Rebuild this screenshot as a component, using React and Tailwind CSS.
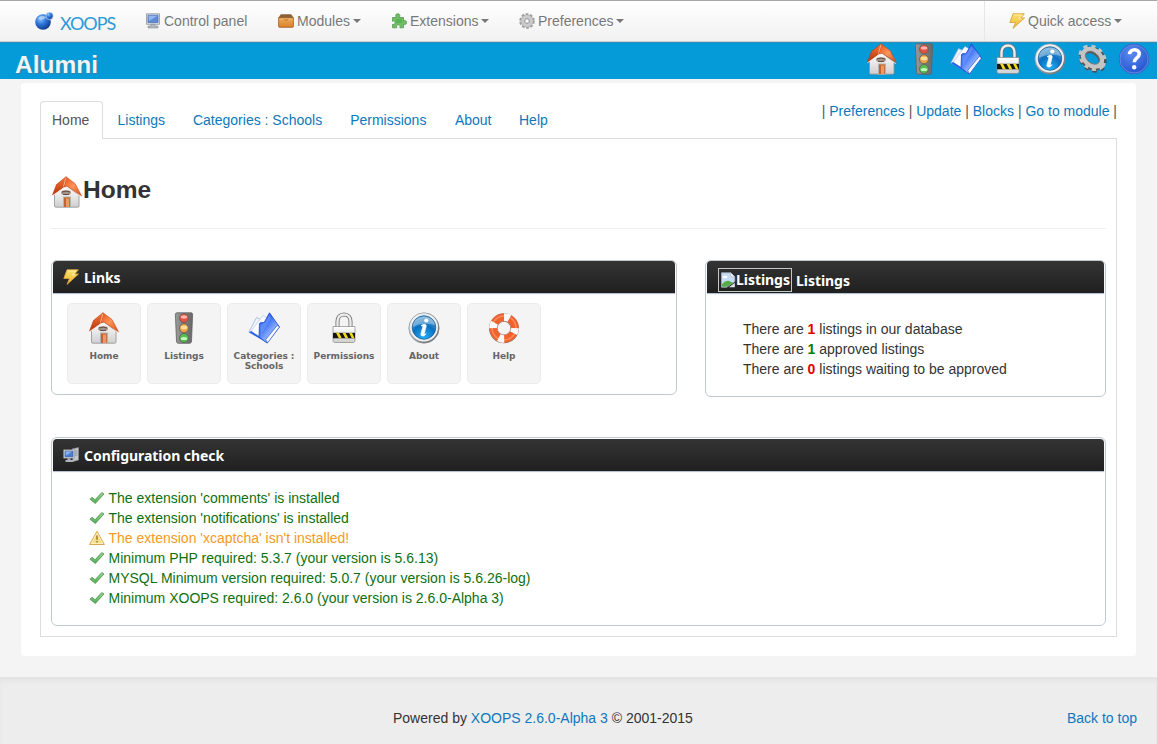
import React from 'react';

function Defs() {
  return (
    <svg className="absolute h-0 w-0" aria-hidden="true">
      <defs>
        <linearGradient id="roofLeft" x1="0" y1="0" x2="0" y2="1">
          <stop offset="0" stopColor="#f7793c" />
          <stop offset="1" stopColor="#b93208" />
        </linearGradient>
        <linearGradient id="roofRight" x1="0" y1="0" x2="1" y2="1">
          <stop offset="0" stopColor="#e84e14" />
          <stop offset=".5" stopColor="#ff9457" />
          <stop offset="1" stopColor="#e04a14" />
        </linearGradient>
        <linearGradient id="wall" x1="0" y1="0" x2="0" y2="1">
          <stop offset="0" stopColor="#ffffff" />
          <stop offset="1" stopColor="#cfcfcf" />
        </linearGradient>
        <linearGradient id="book" x1="0" y1="0" x2=".8" y2="1">
          <stop offset="0" stopColor="#2a5be8" />
          <stop offset=".4" stopColor="#3f74f4" />
          <stop offset=".75" stopColor="#9dbcff" />
          <stop offset="1" stopColor="#3a6cf2" />
        </linearGradient>
        <linearGradient id="steel" x1="0" y1="0" x2="1" y2="1">
          <stop offset="0" stopColor="#f2f2f2" />
          <stop offset=".5" stopColor="#a9a9a9" />
          <stop offset="1" stopColor="#5a5a5a" />
        </linearGradient>
        <linearGradient id="casing" x1="0" y1="0" x2="1" y2="0">
          <stop offset="0" stopColor="#9a9a9a" />
          <stop offset=".5" stopColor="#808080" />
          <stop offset="1" stopColor="#686868" />
        </linearGradient>
        <radialGradient id="info" cx=".5" cy=".9" r=".9">
          <stop offset="0" stopColor="#22b0f8" />
          <stop offset=".55" stopColor="#0c70c0" />
          <stop offset="1" stopColor="#6fa9d4" />
        </radialGradient>
        <radialGradient id="question" cx=".4" cy=".3" r=".8">
          <stop offset="0" stopColor="#5b8bf0" />
          <stop offset="1" stopColor="#2050cc" />
        </radialGradient>
        <radialGradient id="ball" cx=".35" cy=".3" r=".8">
          <stop offset="0" stopColor="#8fc4fb" />
          <stop offset=".45" stopColor="#2b74d8" />
          <stop offset="1" stopColor="#0b2f7c" />
        </radialGradient>
        <linearGradient id="boltFill" x1="0" y1="0" x2="0" y2="1">
          <stop offset="0" stopColor="#fbe070" />
          <stop offset="1" stopColor="#f0b630" />
        </linearGradient>
        <linearGradient id="box" x1="0" y1="0" x2="0" y2="1">
          <stop offset="0" stopColor="#f0ac58" />
          <stop offset="1" stopColor="#dc8028" />
        </linearGradient>
        <linearGradient id="tick" x1="0" y1="0" x2="0" y2="1">
          <stop offset="0" stopColor="#9ad494" />
          <stop offset="1" stopColor="#55aa55" />
        </linearGradient>
      </defs>
    </svg>
  );
}

const Svg = ({ size = 32, children }) => (
  <svg width={size} height={size} viewBox={size > 20 ? '0 0 32 32' : '0 0 16 16'} className="block shrink-0">
    {children}
  </svg>
);

const House = () => (
  <Svg>
    <path d="M3.500 18 13 10h3l12 9v11c0 .8-.5 1.200-1.300 1.200H4.800c-.8 0-1.300-.4-1.300-1.200z" fill="url(#wall)" stroke="#909090" strokeWidth=".8" />
    <path d="M12 20.500h8v11h-8z" fill="#b4b4b4" />
    <path d="M13 21.500h5.800v9.500H13z" fill="#c4642c" />
    <path d="M15 22.500h3V31h-3z" fill="#e89a68" />
    <ellipse cx="15" cy="16.700" rx="5" ry="2.400" fill="#a3958c" />
    <path d="M11 16q4-2 8 0M12 18.200q3 1 6 0" stroke="#5d3e34" strokeWidth=".9" fill="none" />
    <path d="M15 .8 24 7.500 30.500 19.800 16 10 13 11z" fill="url(#roofRight)" stroke="#c8481a" strokeWidth=".6" strokeLinejoin="round" />
    <path d="M15 .8 5.500 8.500 1.500 19 13 10.800z" fill="url(#roofLeft)" stroke="#b5380f" strokeWidth=".6" strokeLinejoin="round" />
    <path d="M15 1.500 12.500 10.500" stroke="#ffc09a" strokeWidth=".9" />
    <path d="M1.500 19.800 14 11.200 30 20.600" fill="none" stroke="#f7e3da" strokeWidth=".9" />
  </Svg>
);

const Light = () => (
  <Svg>
    <path d="M9 .8h14c1.200 0 1.600.7 1.600 1.800L23.500 29c0 1.500-.8 2.300-2.200 2.300H10.700c-1.400 0-2.200-.8-2.200-2.300L7.400 2.600C7.400 1.500 7.800.8 9 .8z" fill="url(#casing)" stroke="#606060" strokeWidth=".8" />
    <g stroke="#5e5e5e" strokeWidth=".8">
      <circle cx="16" cy="6.200" r="4.500" fill="#e4503e" />
      <circle cx="16" cy="16.200" r="4.500" fill="#eda440" />
      <circle cx="16" cy="26" r="4.500" fill="#55c04e" />
    </g>
    <ellipse cx="16" cy="5" rx="3.300" ry="1.700" fill="#ffc5bc" opacity=".85" />
    <ellipse cx="16" cy="15.500" rx="3.300" ry="1.900" fill="#ffe2a8" opacity=".9" />
    <ellipse cx="16" cy="26.500" rx="3.300" ry="1.600" fill="#d3ffcb" opacity=".9" />
  </Svg>
);

const Book = () => (
  <Svg>
    <path d="M.8 20 8.500 5.500 17 9.500 14 27z" fill="#eef2fc" stroke="#9aabd6" strokeWidth=".7" />
    <path d="M4 18 15 3.500l5 3L14 26 4 20z" fill="#fdfdff" stroke="#b3c0e4" strokeWidth=".6" />
    <path d="M1 20.300 3 19l16.500 10.500.5 2z" fill="#2b62ea" />
    <path d="M11.500 11.500c2-2.500 4 .5 5.500-2.500L21.500.8 31.500 15 19 31l-8-6z" fill="url(#book)" stroke="#1e46cc" strokeWidth=".8" strokeLinejoin="round" />
    <path d="M31.300 15.200 19.500 31l-1.800-3.500L29.500 13z" fill="#f5f8ff" stroke="#2c57d8" strokeWidth=".7" />
    <path d="m12 13 5-2.500 4-7 2 3L13 22z" fill="#8fb0ff" opacity=".4" />
  </Svg>
);

const Padlock = () => (
  <Svg>
    <path d="M9.500 16V9.500C9.500 5.300 12 2.500 16 2.500s6.500 2.800 6.500 7V16" fill="none" stroke="#6e6e6e" strokeWidth="4" />
    <path d="M9.500 16V9.500C9.500 5.300 12 2.500 16 2.500s6.500 2.800 6.500 7V16" fill="none" stroke="#ececec" strokeWidth="2.400" />
    <path d="M5 14.500h22v14c0 1.300-.8 2-2 2H7c-1.200 0-2-.7-2-2z" fill="url(#wall)" stroke="#8a8a8a" strokeWidth=".7" />
    <path d="M5 20.800h22v5.500H5z" fill="#161616" />
    <path d="m8 20.800 2.800 5.500h3L11 20.800zM14.500 20.800l2.800 5.500h3l-2.800-5.500zM21 20.800l2.800 5.500h2.700L24 20.800z" fill="#f2dc18" />
  </Svg>
);

const Info = () => (
  <Svg>
    <circle cx="16" cy="16" r="15.200" fill="url(#steel)" stroke="#7d868e" strokeWidth=".6" />
    <circle cx="16" cy="15.500" r="14" fill="#edf1f3" />
    <circle cx="16" cy="15.500" r="11.800" fill="url(#info)" stroke="#175487" strokeWidth=".7" />
    <path d="M5 13C7 2 25 2 27 13c-7-2-15-2-22 2z" fill="#d8eaf5" opacity=".4" />
    <circle cx="18.300" cy="8.500" r="2.100" fill="#fff" />
    <path d="M13 13.800c2-1.700 5.500-2.300 5.200.4l-1.900 7c-.3 1.300.4 1.400 1.800.5-1.300 2.600-5.500 3.300-5.200.4l1.900-7c.2-1.300-.6-1.500-1.800-1.300z" fill="#fff" stroke="#fff" strokeWidth=".7" />
  </Svg>
);

function BigGear() {
  return (
    <Svg>
      <g transform="translate(-.5 -.5) rotate(38 16 16)">
        <ellipse cx="17.500" cy="16" rx="12" ry="9" fill="none" stroke="#4e4e4e" strokeWidth="6" strokeDasharray="3.800 3.600" strokeDashoffset="1" />
        <ellipse cx="17" cy="16.500" rx="10.200" ry="7.600" fill="none" stroke="#5a5a5a" strokeWidth="5" />
        <ellipse cx="16.300" cy="14.800" rx="12.400" ry="9.600" fill="none" stroke="#c4c4c4" strokeWidth="5" strokeDasharray="3.800 3.530" />
        <ellipse cx="16.300" cy="14.800" rx="10.200" ry="7.600" fill="none" stroke="#c4c4c4" strokeWidth="4.600" />
        <ellipse cx="16.300" cy="14.800" rx="8" ry="5.400" fill="none" stroke="#6f7478" strokeWidth=".9" />
      </g>
    </Svg>
  );
}

const Question = () => (
  <Svg>
    <circle cx="16" cy="16" r="15.200" fill="#3862c8" />
    <circle cx="16" cy="16" r="14" fill="url(#question)" stroke="#6f91e8" strokeWidth=".8" />
    <path d="M11.500 11.200c.5-6 10-6 9.700-.1-.2 4-5 3.700-4.900 8.200" fill="none" stroke="#fff" strokeWidth="3.600" />
    <circle cx="16.200" cy="24.300" r="2.200" fill="#fff" />
  </Svg>
);

const Buoy = () => (
  <Svg>
    <circle cx="16" cy="16.300" r="10.800" fill="none" stroke="#9a7a6e" strokeWidth="8.400" />
    <circle cx="16" cy="16" r="10.800" fill="none" stroke="#f2622e" strokeWidth="7.600" />
    <circle cx="16" cy="16" r="12" fill="none" stroke="#ff8a5a" strokeWidth="1.500" />
    <g transform="rotate(13 16 16)">
      <circle cx="16" cy="16" r="10.800" fill="none" stroke="#fafafa" strokeWidth="8" strokeDasharray="5.600 11.365" strokeDashoffset="2.800" />
    </g>
    <circle cx="16" cy="16" r="6.800" fill="none" stroke="#b98a78" strokeWidth=".7" />
  </Svg>
);

const Bolt = () => (
  <Svg size={16}>
    <path d="M4 .8h11.300L11.800 5H15.500L4 15.400 6.500 9.500H.8z" fill="url(#boltFill)" stroke="#d6a63c" strokeWidth=".9" strokeLinejoin="round" />
    <path d="M5 2h8L9.500 6h3" fill="none" stroke="#fff3b4" strokeWidth=".8" />
  </Svg>
);

const Monitor = () => (
  <Svg size={16}>
    <path d="M1.500.8h13v10.500h-13z" fill="#d8dce2" stroke="#8d949e" strokeWidth=".8" />
    <path d="M3 2.300h10v7.200H3z" fill="#5d8bd6" stroke="#4a6fb0" strokeWidth=".7" />
    <path d="M3.500 2.800h9L4 8z" fill="#94b6ee" />
    <path d="M6 11.300h4V13h3v2H3v-2h3z" fill="#b4b8be" stroke="#888e96" strokeWidth=".6" />
  </Svg>
);

const Computer = () => (
  <Svg size={16}>
    <path d="M9 2 15.500.6V13L10 14.500z" fill="#c4c7cb" stroke="#8c9096" strokeWidth=".6" />
    <path d="M12 4h2.500M12 6h2.500M12 8h2.500" stroke="#7a7f86" strokeWidth=".7" />
    <path d="M.6 2.800h10.800v8.400H.6z" fill="#d4d8de" stroke="#868c94" strokeWidth=".6" />
    <path d="M2 4.200h8v5.600H2z" fill="#4b7fd4" stroke="#34589a" strokeWidth=".6" />
    <path d="M2.500 4.600h6.500L3 8.500z" fill="#8fb4f0" />
    <path d="M4.500 11.300h3V13h2.500v2H2.500v-2h2z" fill="#b0b4ba" />
  </Svg>
);

const Drawer = () => (
  <Svg size={16}>
    <path d="M2.800 1.700h10.400L15.200 5H.8z" fill="#8e6238" stroke="#7c4e28" strokeWidth=".7" strokeLinejoin="round" />
    <path d="M.6 4.800h14.800v8.700c0 .5-.3.800-.8.800H1.400c-.5 0-.8-.3-.8-.8z" fill="url(#box)" stroke="#9a5a20" strokeWidth=".8" />
    <path d="M1.400 5.900h13.200" stroke="#f9cd93" strokeWidth=".6" />
    <path d="M5.800 6.300q2.200 2 4.400 0" fill="none" stroke="#b86a24" strokeWidth=".8" />
  </Svg>
);

const Puzzle = () => (
  <Svg size={16}>
    <path d="M1.500 4.500h3.800C4 1.800 5 .8 6.800.8S9.500 2 8.500 4.500h4V8c2-1 3 0 3 1.500s-1 2.500-3 1.700v3.600H8.800c.7-2-.1-3-1.500-3s-2.200 1-1.500 3H1.500v-3.500C3.500 12 4 11 4 9.600S3 7.500 1.500 8.300z" fill="#74bd68" stroke="#549a50" strokeWidth=".8" />
    <path d="M5 6h6v4H5z" fill="#47ad47" opacity=".6" />
  </Svg>
);

const Cog = () => (
  <Svg size={16}>
    <circle cx="8" cy="8" r="6.200" fill="none" stroke="#a0a0a0" strokeWidth="3.200" strokeDasharray="2.500 1.396" />
    <circle cx="8" cy="8" r="4.300" fill="none" stroke="#a2a2a2" strokeWidth="4.400" />
    <circle cx="8" cy="8" r="4.300" fill="none" stroke="#cbcbcb" strokeWidth="3.200" />
    <circle cx="8" cy="8" r="2.100" fill="#fafafa" stroke="#999" strokeWidth=".7" />
  </Svg>
);

const Tick = () => (
  <Svg size={16}>
    <path d="M1 9.200 3 7.200l3 2.600L12.800 2.500l2.200 1.500L6.300 13.500z" fill="url(#tick)" stroke="#4a964c" strokeWidth=".8" strokeLinejoin="round" />
  </Svg>
);

const Warning = () => (
  <Svg size={16}>
    <path d="M8 1.300 15.400 14.500H.6z" fill="#f9dc84" stroke="#dba654" strokeWidth="1" strokeLinejoin="round" />
    <path d="M8 3.300 13.700 13.500H2.300z" fill="none" stroke="#fff4cf" strokeWidth=".8" />
    <path d="M8 5.500v4.300M8 11v1.500" stroke="#9a7426" strokeWidth="1.400" />
  </Svg>
);

const LogoMark = () => (
  <svg width="20" height="18" viewBox="0 0 20 18" className="block shrink-0">
    <circle cx="8" cy="10" r="7.800" fill="url(#ball)" />
    <circle cx="14.500" cy="3.900" r="3.700" fill="url(#ball)" stroke="#dcecff" strokeWidth=".7" />
    <path d="M3 7C5 3 9 3 11 5.500 9 7.500 6 8.500 3 7z" fill="#d4e8ff" opacity=".55" />
  </svg>
);

const Broken = () => (
  <Svg size={16}>
    <path d="M1.500.8h9.300l4 4v4.700l-8 5.700H1.500z" fill="#c7dcf6" stroke="#a4adb8" strokeWidth=".8" />
    <path d="M10.800.8v4h4z" fill="#fff" stroke="#a4adb8" strokeWidth=".6" />
    <path d="M2 14.700V12q5-5.500 9-2l2 .5-5.500 4.200z" fill="#57ad45" />
    <ellipse cx="5" cy="5" rx="2.500" ry="1.300" fill="#fff" />
    <path d="m9 15.200 5.800-4.500v4.500z" fill="#dfe5ec" />
  </Svg>
);

const Caret = () => <span className="ml-[3px] h-0 w-0 border-x-4 border-t-4 border-x-transparent border-t-[#777]" />;

function NavItem({ icon, label, caret, className }) {
  return (
    <a className={`flex items-center whitespace-nowrap text-[#777] ${className}`}>
      {icon}
      <span className="ml-[3px] [text-shadow:0_1px_0_#fff]">{label}</span>
      {caret && <Caret />}
    </a>
  );
}

function PanelHead({ icon, children }) {
  return (
    <div className="flex h-8 items-center rounded-t-[4px] bg-linear-to-b from-[#343434] to-[#202020] pl-[10px] font-['Noto_Sans'] text-[14px] font-bold leading-5 tracking-[-0.05px] text-white shadow-[0_1px_1px_#aebccc]">
      {icon}
      {children}
    </div>
  );
}

const Panel = ({ className, children }) => (
  <section className={`rounded-[6px] border border-[#c2c8d0] bg-white px-px ${className}`}>{children}</section>
);

const Pipe = () => <span className="text-[#555]">|</span>;

const shortcuts = [
  { icon: <House />, label: 'Home' },
  { icon: <Light />, label: 'Listings' },
  { icon: <Book />, label: 'Categories : Schools' },
  { icon: <Padlock />, label: 'Permissions' },
  { icon: <Info />, label: 'About' },
  { icon: <Buoy />, label: 'Help' },
];

const checks = [
  { ok: true, text: "The extension 'comments' is installed" },
  { ok: true, text: "The extension 'notifications' is installed" },
  { ok: false, text: "The extension 'xcaptcha' isn't installed!" },
  { ok: true, text: 'Minimum PHP required: 5.3.7 (your version is 5.6.13)' },
  { ok: true, text: 'MYSQL Minimum version required: 5.0.7 (your version is 5.6.26-log)' },
  { ok: true, text: 'Minimum XOOPS required: 2.6.0 (your version is 2.6.0-Alpha 3)' },
];

export default function App() {
  return (
    <div className="flex h-[744px] w-[1158px] flex-col overflow-hidden border-r border-[#d8d8d8] bg-[#f4f4f4] font-['Liberation_Sans',Arial,sans-serif] text-[14px] leading-5 text-[#333]">
      <Defs />
      <nav className="flex h-[42px] shrink-0 items-stretch border-b border-t border-b-[#d0d0d0] border-t-[#a6a6a6] bg-linear-to-b from-white to-[#f1f1f1] pl-[35px]">
        <a className="flex w-[110px] items-center">
          <LogoMark />
          <span className="ml-[5px] mt-1 font-['Lato'] text-[18px] leading-5 tracking-[-1.1px] text-[#2b9ad6]">XOOPS</span>
        </a>
        <NavItem className="w-[133px]" icon={<Monitor />} label="Control panel" />
        <NavItem className="w-[113px]" icon={<Drawer />} label="Modules" caret />
        <NavItem className="w-[128px]" icon={<Puzzle />} label="Extensions" caret />
        <NavItem className="flex-1" icon={<Cog />} label="Preferences" caret />
        <div className="flex w-[173px] border-l border-[#e6e6e6] pl-[24px]">
          <NavItem icon={<Bolt />} label="Quick access" caret />
        </div>
      </nav>

      <header className="flex h-[37px] shrink-0 items-start justify-between bg-[#059bd9] pl-[15px] pr-[7px] shadow-[inset_0_1px_0_#2a8fbd]">
        <h1 className="mt-[3px] text-[24.5px] font-bold leading-[40px] text-[#eef6fa] [text-shadow:1px_1px_1px_#4a7f99]">Alumni</h1>
        <div className="mt-px flex gap-[10px]">
          <House />
          <Light />
          <Book />
          <Padlock />
          <Info />
          <BigGear />
          <Question />
        </div>
      </header>

      <main className="ml-[21px] mt-1 h-[573px] w-[1115px] shrink-0 rounded-[3px] bg-white px-[19px] pt-[18px]">
        <div className="flex h-[38px] items-start justify-between">
          <div className="flex items-start whitespace-nowrap text-[#0d78bd]">
            <span className="relative z-10 h-[38px] w-[63px] rounded-t-[4px] border border-b-0 border-[#ddd] bg-white pl-[11px] pt-2 text-[#555]">Home</span>
            <span className="ml-[14.500px] pt-[9px]">Listings</span>
            <span className="ml-[28px] pt-[9px]">Categories : Schools</span>
            <span className="ml-[28px] pt-[9px]">Permissions</span>
            <span className="ml-[28.500px] pt-[9px]">About</span>
            <span className="ml-[27.500px] pt-[9px]">Help</span>
          </div>
          <div className="whitespace-pre text-[#0d78bd]">
            <Pipe /> Preferences <Pipe /> Update <Pipe /> Blocks <Pipe /> Go to module <Pipe />
          </div>
        </div>

        <div className="-mt-px h-[499px] w-[1077px] border border-[#ddd] px-[10px]">
          <div className="flex h-[90px] items-start border-b border-[#eee] pt-[37px]">
            <House />
            <h3 className="-mt-[6px] text-[24.5px] font-bold leading-[40px]">Home</h3>
          </div>

          <div className="mt-[31px] flex items-start justify-between">
            <Panel className="h-[135px] w-[626px]">
              <PanelHead icon={<Bolt />}>
                <span className="ml-[5px] mt-px">Links</span>
              </PanelHead>
              <div className="flex gap-[6px] pl-[14px] pt-[10px]">
                {shortcuts.map((s) => (
                  <a
                    key={s.label}
                    className="flex h-[81px] w-[74px] flex-col items-center rounded-[5px] border border-[#ebebeb] bg-[#f4f4f4] pt-2 text-center font-['DejaVu_Sans'] text-[9px] font-bold leading-[10px] tracking-[-0.05px] text-[#666]"
                  >
                    {s.icon}
                    <span className="mt-[7px]">{s.label}</span>
                  </a>
                ))}
              </div>
            </Panel>

            <Panel className="h-[137px] w-[401px]">
              <PanelHead>
                <span className="ml-px mt-[6px] flex h-6 w-[74px] items-center border border-[#c4c8c4] pl-px">
                  <Broken />
                  <span className="-mt-px">Listings</span>
                </span>
                <span className="ml-1 mt-[7px]">Listings</span>
              </PanelHead>
              <div className="pl-9 pt-[26px]">
                <p>There are <b className="text-[#e60000]">1</b> listings in our database</p>
                <p>There are <b className="text-[#008000]">1</b> approved listings</p>
                <p>There are <b className="text-[#e60000]">0</b> listings waiting to be approved</p>
              </div>
            </Panel>
          </div>

          <Panel className="mt-[40px] h-[189px] pt-px">
            <PanelHead icon={<Computer />}>
              <span className="ml-[5px] mt-px">Configuration check</span>
            </PanelHead>
            <ul className="pl-9 pt-[17px]">
              {checks.map((c) => (
                <li key={c.text} className={`flex items-center ${c.ok ? 'text-[#107010]' : 'text-[#f59a23]'}`}>
                  {c.ok ? <Tick /> : <Warning />}
                  <span className="ml-[3.500px]">{c.text}</span>
                </li>
              ))}
            </ul>
          </Panel>
        </div>
      </main>

      <footer className="mt-[21px] flex flex-1 items-start border-t border-[#e5e5e5] bg-[#ededed] pr-5 pt-[30px] shadow-[inset_0_4px_6px_-3px_#dcdcdc]">
        <p className="ml-[393px] flex-1">
          Powered by <a className="text-[#0d78bd]">XOOPS 2.6.0-Alpha 3</a> © 2001-2015
        </p>
        <a className="text-[#0d78bd]">Back to top</a>
      </footer>
    </div>
  );
}
